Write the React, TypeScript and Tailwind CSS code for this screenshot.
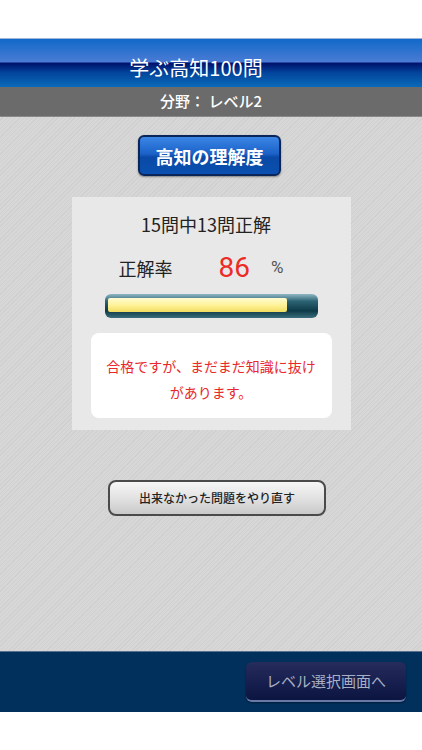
export default function App() {
  const font = { fontFamily: '"Noto Sans CJK JP", "Noto Sans", sans-serif' };
  const correct = 13;
  const total = 15;
  const rate = Math.floor((correct / total) * 100);

  return (
    <div className="flex h-[750px] w-[422px] flex-col bg-white" style={font}>
      <div className="h-[38px] shrink-0 bg-white" />

      {/* title bar */}
      <div className="flex h-[49px] shrink-0 items-center justify-center border-t border-[#9fb4d8] bg-[linear-gradient(to_bottom,#1169c9_0%,#4a7bd4_48%,#00106a_50%,#02449c_70%,#0a6ab8_100%)] pt-[10px] pr-[30px]">
        <span className="text-[20px] leading-none text-white">学ぶ高知100問</span>
      </div>

      {/* subtitle */}
      <div className="flex h-[30px] shrink-0 items-center justify-center border-b border-[#8a8a8a] bg-[#6b6b6b]">
        <span className="text-[15px] font-medium text-white">分野： レベル2</span>
      </div>

      {/* main */}
      <div className="flex flex-1 flex-col items-center bg-[#d5d5d5] bg-[repeating-linear-gradient(135deg,#d7d7d7_0px,#d7d7d7_2px,#d0d0d0_2px,#d0d0d0_3px)] pt-[18px]">
        <div className="ml-[-3px] flex h-[41px] w-[143px] items-center justify-center rounded-[6px] border-2 border-[#0b2558] bg-[linear-gradient(to_bottom,#3a86e6_0%,#1c62c8_45%,#0a4aa6_55%,#0a50b0_100%)] shadow-[0_1px_2px_rgba(0,0,0,0.4)]">
          <span className="text-[18px] font-bold leading-none text-white">高知の理解度</span>
        </div>

        {/* result card */}
        <div className="mt-[21px] flex h-[233px] w-[279px] flex-col bg-[#e8e8e8]">
          <div className="pt-[14px] pr-[10px] text-center text-[18px] leading-[26px] text-[#222]">
            {total}問中{correct}問正解
          </div>
          <div className="mt-[14px] flex h-[34px] items-center pl-[47px]">
            <span className="text-[18px] text-[#222]">正解率</span>
            <span className="ml-[46px] text-[28px] leading-none text-[#ee2a24]" style={{ fontFamily: 'Roboto, sans-serif' }}>
              {rate}
            </span>
            <span className="ml-[21px] text-[17px] text-[#555]" style={{ fontFamily: 'Roboto, sans-serif' }}>
              %
            </span>
          </div>
          <div className="mt-[9px] ml-[33px] h-[24px] w-[213px] rounded-[6px] bg-[linear-gradient(to_bottom,#8fb8c4_0%,#2c6474_30%,#0e3a48_70%,#3a6e7c_100%)] pt-[4px] pb-[6px] pl-[3px]">
            <div
              className="h-full rounded-[2px] bg-[linear-gradient(to_bottom,#fffbd0_0%,#fff39a_50%,#f2dc60_100%)]"
              style={{ width: `${Math.round((rate / 100) * 208)}px` }}
            />
          </div>
          <div className="mt-[15px] ml-[19px] h-[85px] w-[241px] rounded-[8px] bg-white px-[12px] pt-[20px] text-center text-[14px] leading-[26px] text-[#e8282a]">
            合格ですが、まだまだ知識に抜けがあります。
          </div>
        </div>

        <div className="mt-[50px] ml-[12px] flex h-[36px] w-[218px] items-center justify-center rounded-[8px] border-2 border-[#4a4a4a] bg-[linear-gradient(to_bottom,#f6f6f6_0%,#e2e2e2_50%,#c9c9c9_100%)]">
          <span className="text-[12px] font-medium text-[#222]">出来なかった問題をやり直す</span>
        </div>
      </div>

      {/* footer */}
      <div className="flex h-[61px] shrink-0 items-center justify-end border-t border-[#5a7090] bg-[#02305c] pr-[16px]">
        <div className="flex h-[40px] w-[160px] items-center justify-center rounded-[6px] border-b-2 border-[#6a7aa8] bg-[linear-gradient(to_bottom,#262c5c_0%,#182050_50%,#0c1440_100%)] shadow-[0_1px_2px_rgba(0,0,0,0.4)]">
          <span className="text-[15px] text-[#a8b0c4]">レベル選択画面へ</span>
        </div>
      </div>

      <div className="h-[38px] shrink-0 bg-white" />
    </div>
  );
}
